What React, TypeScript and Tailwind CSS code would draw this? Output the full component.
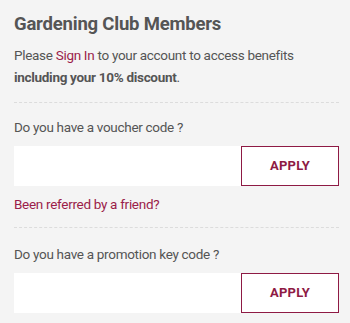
import type { JSX } from "react";

function CodeField({ label }: { label: string }): JSX.Element {
    return (
        <div className="flex flex-col">
            <label className="text-[13.5px] leading-5 tracking-[-0.3px] text-[#555]">{label}</label>
            <div className="mt-[9px] flex h-10">
                <input
                    type="text"
                    className="min-w-0 flex-1 bg-white px-3 text-sm text-[#555] outline-none"
                />
                <button
                    type="button"
                    className="w-[98px] shrink-0 border border-[#8e1a44] bg-white text-[13px] font-bold tracking-[0.2px] text-[#8e1a44]"
                >
                    APPLY
                </button>
            </div>
        </div>
    );
}

export default function App(): JSX.Element {
    return (
        <div
            className="min-h-[323px] w-[350px] bg-[#f4f4f4] pl-[14px] pr-[11px] pt-[12px] text-[#555]"
            style={{ fontFamily: 'Roboto, "Noto Sans", sans-serif' }}
        >
            <h2 className="text-[18.5px] font-bold leading-6 tracking-[-0.2px] text-[#555]">Gardening Club Members</h2>
            <p className="mt-[8px] text-[13.5px] leading-[22px] tracking-[-0.3px]">
                Please <a className="text-[#9b1d4a]">Sign In</a> to your account to access benefits{" "}
                <strong className="font-bold">including your 10% discount</strong>.
            </p>
            <div className="mt-[14px] border-t border-dashed border-[#dcdcdc]" />
            <div className="mt-[14px]">
                <CodeField label="Do you have a voucher code ?" />
            </div>
            <a className="mt-[8px] block text-[13.5px] leading-5 tracking-[-0.3px] text-[#9b1d4a]">Been referred by a friend?</a>
            <div className="mt-[13px] border-t border-dashed border-[#dcdcdc]" />
            <div className="mt-[16px]">
                <CodeField label="Do you have a promotion key code ?" />
            </div>
        </div>
    );
}
